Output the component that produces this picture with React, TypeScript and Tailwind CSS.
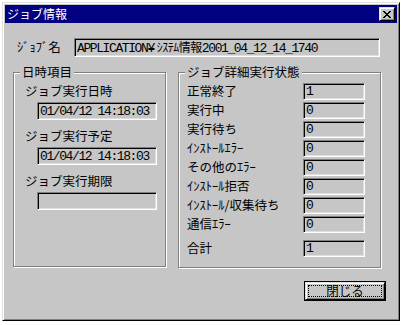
import React from "react";

const jp = "font-['Noto_Sans_CJK_JP',sans-serif]";
const mono = "font-['Liberation_Mono','Noto_Sans_CJK_JP',monospace]";

// Win95 style bevels
const raised =
  "border border-t-[#dfdfdf] border-l-[#dfdfdf] border-r-black border-b-black shadow-[inset_1px_1px_0_#fff,inset_-1px_-1px_0_#808080]";
const sunken =
  "border border-t-[#808080] border-l-[#808080] border-r-white border-b-white shadow-[inset_1px_1px_0_#000,inset_-1px_-1px_0_#dfdfdf]";
const etched = "border border-[#808080] shadow-[inset_1px_1px_0_#fff,1px_1px_0_#fff]";

const statusRows = [
  { label: "正常終了", value: "1" },
  { label: "実行中", value: "0" },
  { label: "実行待ち", value: "0" },
  { label: "ｲﾝｽﾄｰﾙｴﾗｰ", value: "0" },
  { label: "その他のｴﾗｰ", value: "0" },
  { label: "ｲﾝｽﾄｰﾙ拒否", value: "0" },
  { label: "ｲﾝｽﾄｰﾙ/収集待ち", value: "0" },
  { label: "通信ｴﾗｰ", value: "0" },
];

const dateRows = [
  { label: "ジョブ実行日時", value: "01/04/12 14:18:03" },
  { label: "ジョブ実行予定", value: "01/04/12 14:18:03" },
  { label: "ジョブ実行期限", value: "" },
];

function Field({ children, className }: { children: React.ReactNode; className: string }) {
  return (
    <div className={`${sunken} ${className} flex items-center pl-[2px] bg-[#c6c6c6]`}>
      <span className={`${mono} text-[13px] tracking-[-1.4px] leading-none text-black whitespace-nowrap`}>
        {children}
      </span>
    </div>
  );
}

function Group({ title, className, children }: { title: string; className: string; children: React.ReactNode }) {
  return (
    <div className={`relative ${etched} ${className}`}>
      <span className={`absolute -top-[9px] left-[6px] px-[2px] bg-[#c6c6c6] ${jp} text-[12.5px] leading-[16px] text-black`}>
        {title}
      </span>
      {children}
    </div>
  );
}

export default function App() {
  return (
    <div className="w-[404px] h-[325px] bg-white pt-[2px] pl-[2px]">
      <div className={`w-[398px] h-[319px] bg-[#c6c6c6] ${raised} p-[2px] flex flex-col`}>
        {/* title bar */}
        <div className="h-[18px] bg-[#000080] flex items-center justify-between pl-[2px] pr-[2px]">
          <span className={`${jp} text-[12px] leading-none text-white`}>ジョブ情報</span>
          <button className={`w-[16px] h-[14px] bg-[#c6c6c6] ${raised} flex items-center justify-center`}>
            <svg width="8" height="7" viewBox="0 0 8 7" shapeRendering="crispEdges">
              <path
                d="M0 0h2v1h-2zM6 0h2v1h-2zM1 1h2v1h-2zM5 1h2v1h-2zM2 2h4v1h-4zM3 3h2v1h-2zM2 4h4v1h-4zM1 5h2v1h-2zM5 5h2v1h-2zM0 6h2v1h-2zM6 6h2v1h-2z"
                fill="#000"
              />
            </svg>
          </button>
        </div>

        {/* job name */}
        <div className="flex items-center mt-[15px] pl-[12px]">
          <span className={`${jp} text-[12.5px] leading-none text-black w-[57px]`}>ｼﾞｮﾌﾞ名</span>
          <Field className="w-[306px] h-[19px]">
            APPLICATION¥
            <span className={`${jp} text-[12px] tracking-[-0.5px] ml-[3px]`}>ｼｽﾃﾑ情報</span>
            2001_04_12_14_1740
          </Field>
        </div>

        {/* groups */}
        <div className="flex mt-[15px] pl-[8px] gap-[12px]">
          <Group title="日時項目" className="w-[153px] h-[195px] pt-[10px]">
            {dateRows.map((r, i) => (
              <div key={r.label} className={i === 0 ? "" : "mt-[8px]"}>
                <div className={`${jp} text-[12.5px] leading-[16px] text-black pl-[11px]`}>{r.label}</div>
                <Field className="ml-[23px] mt-[3px] w-[120px] h-[18px]">{r.value}</Field>
              </div>
            ))}
          </Group>

          <Group title="ジョブ詳細実行状態" className="w-[203px] h-[196px] pt-[10px]">
            <div className="flex flex-col gap-[2px]">
              {statusRows.map((r) => (
                <div key={r.label} className="flex items-center">
                  <span className={`${jp} text-[12.5px] leading-none text-black pl-[8px] w-[124px] whitespace-nowrap`}>
                    {r.label}
                  </span>
                  <Field className="w-[62px] h-[17px]">{r.value}</Field>
                </div>
              ))}
              <div className="flex items-center mt-[5px]">
                <span className={`${jp} text-[12.5px] leading-none text-black pl-[8px] w-[124px]`}>合計</span>
                <Field className="w-[62px] h-[17px]">1</Field>
              </div>
            </div>
          </Group>
        </div>

        {/* close button */}
        <div className="flex justify-end mt-[13px] pr-[11px]">
          <button className="w-[82px] h-[20px] border border-black bg-[#c6c6c6]">
            <div className={`w-full h-full ${raised} p-[2px]`}>
              <div className={`w-full h-full border border-dotted border-black flex items-center justify-center ${jp} text-[12.5px] leading-none text-black`}>
                閉じる
              </div>
            </div>
          </button>
        </div>
      </div>
    </div>
  );
}
